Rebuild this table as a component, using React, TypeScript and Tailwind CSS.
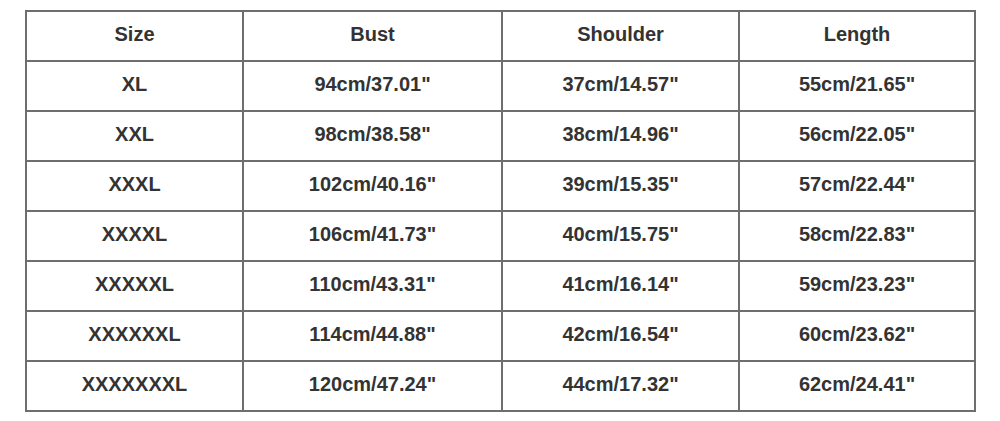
import React from "react";

const header = ["Size", "Bust", "Shoulder", "Length"];
const rows = [
  ["XL", "94cm/37.01\"", "37cm/14.57\"", "55cm/21.65\""],
  ["XXL", "98cm/38.58\"", "38cm/14.96\"", "56cm/22.05\""],
  ["XXXL", "102cm/40.16\"", "39cm/15.35\"", "57cm/22.44\""],
  ["XXXXL", "106cm/41.73\"", "40cm/15.75\"", "58cm/22.83\""],
  ["XXXXXL", "110cm/43.31\"", "41cm/16.14\"", "59cm/23.23\""],
  ["XXXXXXL", "114cm/44.88\"", "42cm/16.54\"", "60cm/23.62\""],
  ["XXXXXXXL", "120cm/47.24\"", "44cm/17.32\"", "62cm/24.41\""],
];

const widths = ["w-[217px]", "w-[259px]", "w-[237px]", "w-[236px]"];

export default function App() {
  return (
    <div className="w-[1000px] h-[421px] bg-white pt-[10px] pl-[25px]" style={{ fontFamily: '"Liberation Sans", Arial, sans-serif' }}>
      <table className="border-collapse border-2 border-[#6e6e6e] text-[#333333] font-bold text-[20px]">
        <tbody>
          {[header, ...rows].map((r, i) => (
            <tr key={i} className="h-[50px]">
              {r.map((c, j) => (
                <td key={j} className={`${widths[j]} border-2 border-[#6e6e6e] text-center align-middle p-0 pb-[4px] leading-none`}>
                  {c}
                </td>
              ))}
            </tr>
          ))}
        </tbody>
      </table>
    </div>
  );
}
